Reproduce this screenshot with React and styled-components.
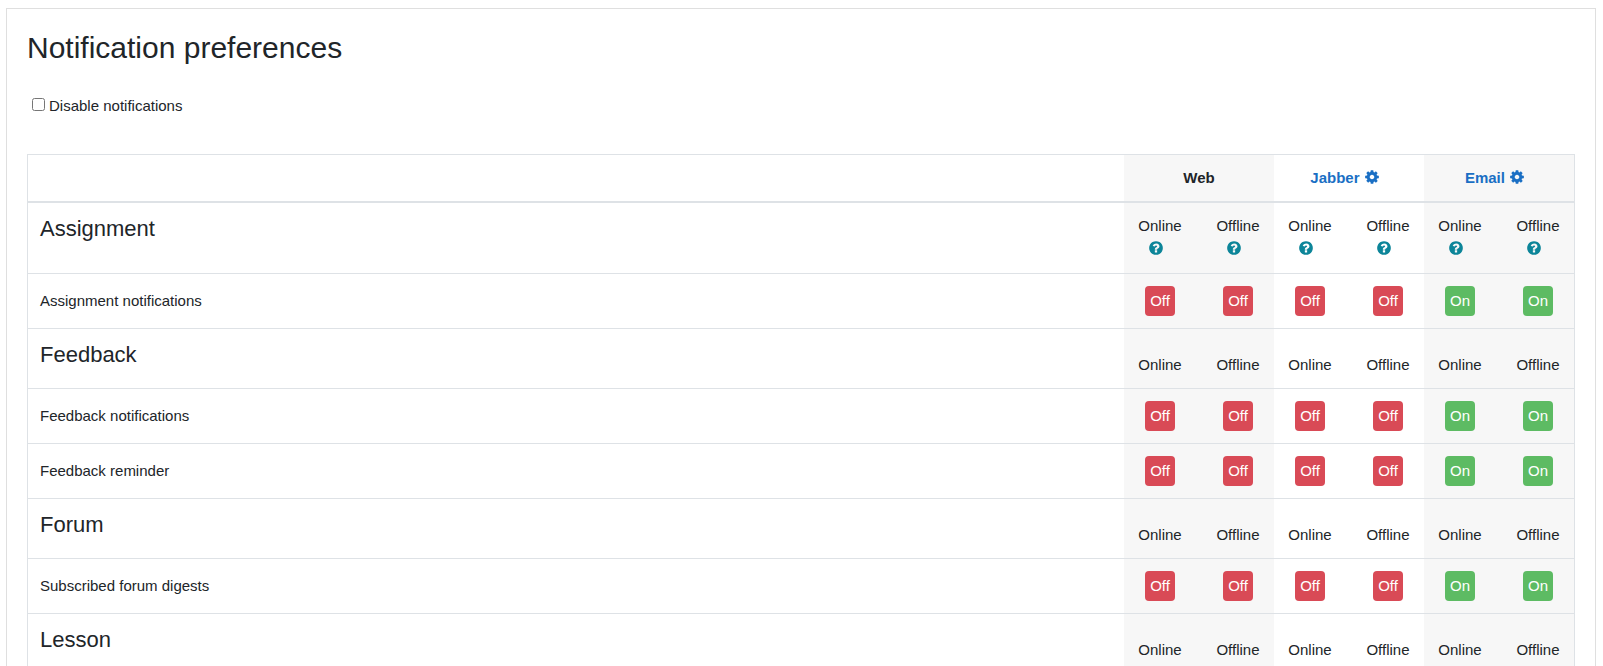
import React, { useState } from "react";
import styled, { createGlobalStyle } from "styled-components";

const GlobalStyle = createGlobalStyle`
  *, *::before, *::after { box-sizing: border-box; }
  body {
    margin: 0;
    background: #fff;
    color: #212529;
    font-family: "Liberation Sans", Arial, sans-serif;
    font-size: 15px;
    line-height: 22px;
  }
`;

const Page = styled.main`
  padding: 8px 7px 0 6px;
`;

const Card = styled.section`
  border: 1px solid #dfdfdf;
  padding: 20px;
`;

const Title = styled.h2`
  margin: 0 0 28px;
  font-size: 30px;
  font-weight: 400;
  line-height: 38px;
`;

const CheckLabel = styled.label`
  display: flex;
  align-items: flex-start;
  width: fit-content;
  margin-bottom: 37px;
  padding-left: 5px;
`;

const Checkbox = styled.input`
  width: 13px;
  height: 13px;
  margin: 3px 4px 0 0;
`;

const Table = styled.table`
  width: 100%;
  table-layout: fixed;
  border: 1px solid #dee2e6;
  border-collapse: separate;
  border-spacing: 0;
`;

const NameColumn = styled.col``;

const ProcessorColumn = styled.col`
  width: 150px;
`;

const HeadCell = styled.th`
  height: 48px;
  padding: 12px;
  border-bottom: 2px solid #dee2e6;
  background: ${(p) => (p.$shaded ? "#f7f7f7" : "transparent")};
  text-align: center;
`;

const Row = styled.tr`
  & + & > * {
    border-top: 1px solid #dee2e6;
  }
`;

const NameCell = styled.th`
  padding: 12px;
  font-weight: 400;
  text-align: left;
  vertical-align: ${(p) => (p.$group ? "top" : "middle")};
`;

const StateCell = styled.td`
  padding: 12px;
  background: ${(p) => (p.$shaded ? "#f7f7f7" : "transparent")};
  vertical-align: bottom;
`;

const StatePair = styled.div`
  display: flex;
  justify-content: space-between;
`;

const StateItem = styled.div`
  display: flex;
  flex-direction: column;
  align-items: center;
  width: 48px;
`;

const GroupTitle = styled.h3`
  margin: 0 0 8px;
  font-size: 22px;
  font-weight: 400;
  line-height: 27px;
`;

const SettingsLink = styled.a`
  color: #1a6fc4;
  text-decoration: none;
`;

const Icon = styled.svg`
  width: 16px;
  height: 16px;
  margin-right: 8px;
  fill: currentColor;
  vertical-align: -2px;
`;

const HelpButton = styled.button`
  height: 24px;
  padding: 0;
  border: 0;
  background: none;
  color: #0c8599;
  font: inherit;
  cursor: pointer;
`;

const Toggle = styled.button`
  width: 30px;
  height: 30px;
  padding: 0;
  border: 0;
  border-radius: 4px;
  background: ${(p) => (p.$on ? "#5dbb63" : "#d94a56")};
  color: #fff;
  font: inherit;
  cursor: pointer;
`;

const GEAR =
  "M1152 896q0-106-75-181t-181-75-181 75-75 181 75 181 181 75 181-75 75-181zm512-109v222q0 12-8 23t-20 13l-185 28q-19 54-39 91 35 50 107 138 10 12 10 25t-9 23q-27 37-99 108t-94 71q-12 0-26-9l-138-108q-44 23-91 38-16 136-29 186-7 28-36 28h-222q-14 0-24.5-8.5t-11.5-21.5l-28-184q-49-16-90-37l-141 107q-10 9-25 9-14 0-25-11-126-114-165-168-7-10-7-23 0-12 8-23 15-21 51-66.5t54-70.5q-27-50-41-99l-183-27q-13-2-21-12.5t-8-23.5v-222q0-12 8-23t19-13l186-28q14-46 39-92-40-57-107-138-10-12-10-24 0-10 9-23 26-36 98.5-107.5t94.5-71.5q13 0 26 10l138 107q44-23 91-38 16-136 29-186 7-28 36-28h222q14 0 24.5 8.5t11.5 21.5l28 184q49 16 90 37l142-107q9-9 24-9 13 0 25 10 129 119 165 170 7 8 7 22 0 12-8 23-15 21-51 66.5t-54 70.5q26 50 41 98l183 28q13 2 21 12.5t8 23.5z";

const QUESTION =
  "M1024 1376v-192q0-14-9-23t-23-9h-192q-14 0-23 9t-9 23v192q0 14 9 23t23 9h192q14 0 23-9t9-23zm256-672q0-88-55.5-163t-138.5-116-170-41q-243 0-371 213-15 24 8 42l132 100q7 6 19 6 16 0 25-12 53-68 86-92 34-24 86-24 48 0 85.5 26t37.5 59q0 38-20 61t-68 45q-63 28-115.5 86.5t-52.5 125.5v36q0 14 9 23t23 9h192q14 0 23-9t9-23q0-19 21.5-49.5t54.5-49.5q32-18 49-28.5t46-35 44.5-48 28-60.5 12.5-81zm384 192q0 209-103 385.5t-279.5 279.5-385.5 103-385.5-103-279.5-279.5-103-385.5 103-385.5 279.5-279.5 385.5-103 385.5 103 279.5 279.5 103 385.5z";

const Glyph = ({ path }) => (
  <Icon viewBox="0 0 1792 1792" aria-hidden="true">
    <path d={path} />
  </Icon>
);

const PROCESSORS = [
  { name: "Web", enabled: false, shaded: true },
  { name: "Jabber", enabled: false, settings: true },
  { name: "Email", enabled: true, settings: true, shaded: true },
];

const STATES = ["Online", "Offline"];

const GROUPS = [
  { name: "Assignment", help: true, items: ["Assignment notifications"] },
  { name: "Feedback", items: ["Feedback notifications", "Feedback reminder"] },
  { name: "Forum", items: ["Subscribed forum digests"] },
  { name: "Lesson", items: [] },
];

function GroupRow({ group }) {
  return (
    <Row>
      <NameCell scope="row" $group>
        <GroupTitle>{group.name}</GroupTitle>
      </NameCell>
      {PROCESSORS.map((p) => (
        <StateCell key={p.name} $shaded={p.shaded}>
          <StatePair>
            {STATES.map((state) => (
              <StateItem key={state}>
                <span>{state}</span>
                {group.help && (
                  <HelpButton type="button" aria-label={`Help with ${state}`}>
                    <Glyph path={QUESTION} />
                  </HelpButton>
                )}
              </StateItem>
            ))}
          </StatePair>
        </StateCell>
      ))}
    </Row>
  );
}

function StateToggle({ initial, label }) {
  const [on, setOn] = useState(initial);
  return (
    <Toggle
      type="button"
      title={label}
      aria-pressed={on}
      $on={on}
      onClick={() => setOn(!on)}
    >
      {on ? "On" : "Off"}
    </Toggle>
  );
}

function PreferenceRow({ name }) {
  return (
    <Row>
      <NameCell scope="row">{name}</NameCell>
      {PROCESSORS.map((p) => (
        <StateCell key={p.name} $shaded={p.shaded}>
          <StatePair>
            {STATES.map((state) => (
              <StateItem key={state}>
                <StateToggle
                  initial={p.enabled}
                  label={`${name}, ${p.name}, ${state}`}
                />
              </StateItem>
            ))}
          </StatePair>
        </StateCell>
      ))}
    </Row>
  );
}

export default function App() {
  return (
    <>
      <GlobalStyle />
      <Page>
        <Card>
          <Title>Notification preferences</Title>
          <CheckLabel htmlFor="disable-all">
            <Checkbox id="disable-all" type="checkbox" />
            Disable notifications
          </CheckLabel>
          <Table>
            <colgroup>
              <NameColumn />
              {PROCESSORS.map((p) => (
                <ProcessorColumn key={p.name} />
              ))}
            </colgroup>
            <thead>
              <tr>
                <HeadCell as="td" />
                {PROCESSORS.map((p) => (
                  <HeadCell key={p.name} scope="col" $shaded={p.shaded}>
                    {p.settings ? (
                      <SettingsLink href="#">
                        {p.name} <Glyph path={GEAR} />
                      </SettingsLink>
                    ) : (
                      p.name
                    )}
                  </HeadCell>
                ))}
              </tr>
            </thead>
            <tbody>
              {GROUPS.map((group) => (
                <React.Fragment key={group.name}>
                  <GroupRow group={group} />
                  {group.items.map((item) => (
                    <PreferenceRow key={item} name={item} />
                  ))}
                </React.Fragment>
              ))}
            </tbody>
          </Table>
        </Card>
      </Page>
    </>
  );
}
